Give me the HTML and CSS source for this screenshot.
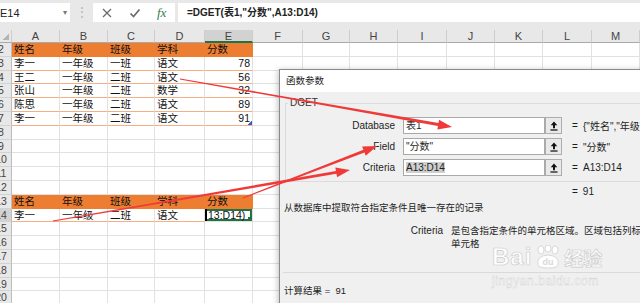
FILE: index.html
```html
<!DOCTYPE html>
<html lang="zh-CN">
<head>
    <meta charset="UTF-8">
    <meta name="viewport" content="width=device-width, initial-scale=1.0">
    <title>DGET 函数参数</title>
    <link rel="stylesheet" href="styles.css">
</head>
<body>

<!-- formula bar -->
<div class="formula-bar">
    <div class="name-box"><span>E14</span><span class="drop">▾</span></div>
    <div class="grip">⋮</div>
    <div class="fx-box">
        <svg class="ico" viewBox="0 0 12 12"><path d="M2 2 L10 10 M10 2 L2 10" stroke="#6b6b6b" stroke-width="1.3"/></svg>
        <svg class="ico" viewBox="0 0 12 12"><path d="M1.5 6.5 L4.5 9.5 L10.5 2.5" fill="none" stroke="#6b6b6b" stroke-width="1.7"/></svg>
        <span class="fx">fx</span>
    </div>
    <div class="formula">=DGET(表1,"分数",A13:D14)</div>
</div>

<!-- worksheet -->
<div class="sheet">
    <div class="row heads"><span class="corner"></span><span>A</span><span>B</span><span>C</span><span>D</span><span class="sel">E</span><span>F</span><span>G</span><span>H</span><span>I</span><span>J</span><span>K</span><span>L</span><span>M</span></div>
    <div class="row"><span class="rh"><span class="n">2</span></span><span class="th">姓名</span><span class="th">年级</span><span class="th">班级</span><span class="th">学科</span><span class="th">分数</span><span></span><span></span><span></span><span></span><span></span><span></span><span></span><span></span></div>
    <div class="row"><span class="rh"><span class="n">3</span></span><span class="td">李一</span><span class="td">一年级</span><span class="td">一班</span><span class="td">语文</span><span class="td num">78</span><span></span><span></span><span></span><span></span><span></span><span></span><span></span><span></span></div>
    <div class="row"><span class="rh"><span class="n">4</span></span><span class="td">王二</span><span class="td">一年级</span><span class="td">二班</span><span class="td">语文</span><span class="td num">56</span><span></span><span></span><span></span><span></span><span></span><span></span><span></span><span></span></div>
    <div class="row"><span class="rh"><span class="n">5</span></span><span class="td">张山</span><span class="td">一年级</span><span class="td">二班</span><span class="td">数学</span><span class="td num">32</span><span></span><span></span><span></span><span></span><span></span><span></span><span></span><span></span></div>
    <div class="row"><span class="rh"><span class="n">6</span></span><span class="td">陈思</span><span class="td">一年级</span><span class="td">二班</span><span class="td">语文</span><span class="td num">89</span><span></span><span></span><span></span><span></span><span></span><span></span><span></span><span></span></div>
    <div class="row"><span class="rh"><span class="n">7</span></span><span class="td">李一</span><span class="td">一年级</span><span class="td">二班</span><span class="td">语文</span><span class="td num resize">91</span><span></span><span></span><span></span><span></span><span></span><span></span><span></span><span></span></div>
    <div class="row"><span class="rh"><span class="n">8</span></span><span></span><span></span><span></span><span></span><span></span><span></span><span></span><span></span><span></span><span></span><span></span><span></span><span></span></div>
    <div class="row"><span class="rh"><span class="n">9</span></span><span></span><span></span><span></span><span></span><span></span><span></span><span></span><span></span><span></span><span></span><span></span><span></span><span></span></div>
    <div class="row"><span class="rh"><span class="n">10</span></span><span></span><span></span><span></span><span></span><span></span><span></span><span></span><span></span><span></span><span></span><span></span><span></span><span></span></div>
    <div class="row"><span class="rh"><span class="n">11</span></span><span></span><span></span><span></span><span></span><span></span><span></span><span></span><span></span><span></span><span></span><span></span><span></span><span></span></div>
    <div class="row"><span class="rh"><span class="n">12</span></span><span></span><span></span><span></span><span></span><span></span><span></span><span></span><span></span><span></span><span></span><span></span><span></span><span></span></div>
    <div class="row"><span class="rh"><span class="n">13</span></span><span class="th">姓名</span><span class="th">年级</span><span class="th">班级</span><span class="th">学科</span><span class="th">分数</span><span></span><span></span><span></span><span></span><span></span><span></span><span></span><span></span></div>
    <div class="row"><span class="rh sel"><span class="n">14</span></span><span class="td">李一</span><span class="td">一年级</span><span class="td">二班</span><span class="td">语文</span><span class="active"><span class="caret"></span>13:D14)</span><span></span><span></span><span></span><span></span><span></span><span></span><span></span><span></span></div>
    <div class="row"><span class="rh"><span class="n">15</span></span><span></span><span></span><span></span><span></span><span></span><span></span><span></span><span></span><span></span><span></span><span></span><span></span><span></span></div>
    <div class="row"><span class="rh"><span class="n">16</span></span><span></span><span></span><span></span><span></span><span></span><span></span><span></span><span></span><span></span><span></span><span></span><span></span><span></span></div>
    <div class="row"><span class="rh"><span class="n">17</span></span><span></span><span></span><span></span><span></span><span></span><span></span><span></span><span></span><span></span><span></span><span></span><span></span><span></span></div>
    <div class="row"><span class="rh"><span class="n">18</span></span><span></span><span></span><span></span><span></span><span></span><span></span><span></span><span></span><span></span><span></span><span></span><span></span><span></span></div>
    <div class="row"><span class="rh"><span class="n">19</span></span><span></span><span></span><span></span><span></span><span></span><span></span><span></span><span></span><span></span><span></span><span></span><span></span><span></span></div>
    <div class="row"><span class="rh"><span class="n">20</span></span><span></span><span></span><span></span><span></span><span></span><span></span><span></span><span></span><span></span><span></span><span></span><span></span><span></span></div>
</div>

<!-- function arguments dialog -->
<div class="dialog">
    <div class="dlg-title">函数参数</div>
    <fieldset class="args">
        <legend>DGET</legend>
        <div class="arg">
            <label>Database</label>
            <div class="input">表1</div>
            <button class="pick"><svg viewBox="0 0 9 11"><path d="M4.5 0.5 L0.8 4.6 H3.4 V8 H5.6 V4.6 H8.2 Z"/><rect x="0.5" y="9.3" width="8" height="1.4"/></svg></button>
            <span class="eq">=</span><span class="val">{"姓名","年级"</span>
        </div>
        <div class="arg">
            <label>Field</label>
            <div class="input">"分数"</div>
            <button class="pick"><svg viewBox="0 0 9 11"><path d="M4.5 0.5 L0.8 4.6 H3.4 V8 H5.6 V4.6 H8.2 Z"/><rect x="0.5" y="9.3" width="8" height="1.4"/></svg></button>
            <span class="eq">=</span><span class="val">"分数"</span>
        </div>
        <div class="arg">
            <label>Criteria</label>
            <div class="input"><span class="picked">A13:D14</span></div>
            <button class="pick"><svg viewBox="0 0 9 11"><path d="M4.5 0.5 L0.8 4.6 H3.4 V8 H5.6 V4.6 H8.2 Z"/><rect x="0.5" y="9.3" width="8" height="1.4"/></svg></button>
            <span class="eq">=</span><span class="val">A13:D14</span>
        </div>
    </fieldset>
    <div class="result-line"><span>=</span><span class="val">91</span></div>
    <p class="desc">从数据库中提取符合指定条件且唯一存在的记录</p>
    <div class="help">
        <span class="help-name">Criteria</span>
        <span class="help-text">是包含指定条件的单元格区域。区域包括列标签<br>单元格</span>
    </div>
    <hr class="rule">
    <div class="total">计算结果 = &nbsp;91</div>
</div>

<!-- watermark -->
<div class="watermark">
    <div class="wm-top">
        <span class="wm-bai">Bai</span>
        <svg class="paw" viewBox="0 0 32 24">
            <ellipse cx="9" cy="5" rx="3" ry="4"/>
            <ellipse cx="16" cy="3.5" rx="3" ry="3.5"/>
            <ellipse cx="23" cy="5" rx="3" ry="4"/>
            <path d="M6 20 Q4 11 16 10 Q28 11 26 20 Q25 23 16 23 Q7 23 6 20 Z"/>
            <text x="16" y="20" text-anchor="middle">du</text>
        </svg>
        <span class="wm-jy">经验</span>
    </div>
    <div class="wm-url">jingyan.baidu.com</div>
</div>

<!-- red annotation arrows -->
<svg class="arrows" viewBox="0 0 640 303">
    <polygon points="180.09,78.51 438.46,123.09 439.07,119.65 452,127 437.33,129.49 437.94,126.05 179.91,79.49"/>
    <polygon points="242.82,197.53 363.40,149.67 362.13,146.41 377,146 365.75,155.73 364.48,152.47 243.18,198.47"/>
    <polygon points="52.92,220.51 335.95,170.89 335.35,167.44 350,170 337.05,177.30 336.45,173.85 53.08,221.49"/>
</svg>

</body>
</html>
```

FILE: styles.css
```css
/* Excel window with the DGET argument dialog */
* {
    box-sizing: border-box;
}
body {
    margin: 0;
    width: 640px;
    height: 303px;
    overflow: hidden;
    position: relative;
    background-color: #fff;
    font-family: "Liberation Sans", "Noto Sans CJK SC", sans-serif;
    color: #111;
}

/* formula bar */
.formula-bar {
    display: flex;
    height: 30px;
    padding: 3px 0 8px;
    background-color: #e8e8e8;
    font-size: 11px;
}
.name-box {
    width: 70px;
    background-color: #fff;
    display: flex;
    align-items: center;
    justify-content: space-between;
    padding-right: 3px;
    color: #222;
}
.drop {
    font-size: 8px;
    color: #777;
}
.grip {
    width: 23px;
    text-align: center;
    line-height: 19px;
    color: #b3b3b3;
    font-size: 12px;
}
.fx-box {
    width: 82px;
    background-color: #fff;
    display: flex;
    align-items: center;
    gap: 16px;
    padding-left: 8px;
}
.ico {
    width: 12px;
    height: 12px;
}
.fx {
    width: 12px;
    font-family: "Liberation Serif", serif;
    font-style: italic;
    font-size: 13px;
    color: #2e7d4f;
}
.formula {
    flex: 1;
    margin-left: 3px;
    background-color: #fff;
    padding-left: 9px;
    line-height: 19px;
    font-size: 10px;
    font-weight: bold;
    color: #222;
}

/* worksheet grid */
.row {
    display: grid;
    grid-template-columns: 12px 48px 48px 47px 50px 48px 50px 47px 48px 49px 48px 48px 49px 48px;
    height: 13.8px;
    font-size: 10.5px;
    line-height: 12.8px;
}
.row > span {
    border-right: 1px solid #e1e1e1;
    border-bottom: 1px solid #e1e1e1;
    padding: 0 2px;
    white-space: nowrap;
    overflow: hidden;
}
.heads {
    height: 13px;
    background-color: #e8e8e8;
    color: #444;
    font-size: 11px;
    line-height: 12px;
    text-align: center;
}
.heads > span {
    border-right-color: #cdcdcd;
    border-bottom-color: #a9a9a9;
}
.heads > .sel {
    background-color: #d2d2d2;
    border-bottom: 2px solid #217346;
}
.heads > .corner {
    background: linear-gradient(135deg, transparent 52%, #b4b4b4 52%) right 2px bottom 2px / 7px 7px no-repeat;
}
.row > .rh {
    padding: 0;
    background-color: #e8e8e8;
    color: #444;
    border-right-color: #bdbdbd;
    border-bottom-color: #d2d2d2;
}
.row > .rh.sel {
    background-color: #d2d2d2;
}
.n {
    display: block;
    width: 22px;
    margin-left: -10px;
    text-align: center;
}
.row > .th {
    background-color: #ed7d31;
    border-right-color: #ed7d31;
    border-bottom-color: #ed7d31;
}
.row > .td {
    border-bottom-color: #f4b084;
}
.num {
    text-align: right;
}
.resize {
    position: relative;
}
.resize::after {
    content: "";
    position: absolute;
    right: 0;
    bottom: 0;
    width: 4px;
    height: 4px;
    background: linear-gradient(135deg, transparent 45%, #3b5bc8 45%);
}
.row > .active {
    position: relative;
    padding: 0;
    box-shadow: inset 0 0 0 2px #217346;
}
.active::after {
    content: "";
    position: absolute;
    right: 0;
    bottom: 0;
    width: 4px;
    height: 4px;
    background-color: #217346;
}
.caret {
    display: inline-block;
    width: 2px;
    height: 12px;
    margin-right: 1px;
    vertical-align: -2px;
    background-color: #000;
}

/* dialog */
.dialog {
    position: absolute;
    left: 279px;
    top: 69px;
    width: 380px;
    height: 240px;
    background-color: #f0f0f0;
    border: 1px solid #8a8a8a;
    box-shadow: -1px 1px 6px rgba(0, 0, 0, 0.25);
    font-size: 10px;
    color: #1e1e1e;
}
.dlg-title {
    height: 22px;
    line-height: 22px;
    padding-left: 6px;
    background-color: #fff;
    font-size: 9.5px;
}
.args {
    margin: 5px 5px 0;
    padding: 8px 0 5px;
    border: 1px solid #dcdcdc;
    min-width: 0;
}
.args legend {
    margin-left: 2px;
    padding: 0 2px;
    line-height: 12px;
    color: #333;
}
.arg {
    display: flex;
    align-items: center;
    height: 17px;
}
.arg + .arg {
    margin-top: 4px;
}
.arg label {
    width: 109px;
    margin-right: 8px;
    text-align: right;
}
.input {
    width: 142px;
    height: 17px;
    padding: 0 2px;
    line-height: 15px;
    background-color: #fff;
    border: 1px solid #a9a9a9;
    white-space: nowrap;
    overflow: hidden;
}
.picked {
    background-color: #cfcfcf;
}
.pick {
    width: 17px;
    height: 17px;
    padding: 0;
    display: flex;
    align-items: center;
    justify-content: center;
    background-color: #e9e9e9;
    border: 1px solid #adadad;
}
.pick svg {
    width: 8px;
    height: 10px;
    fill: #111;
}
.eq {
    width: 6px;
    margin-left: 10px;
}
.val {
    margin-left: 5px;
    white-space: nowrap;
}
.result-line {
    margin-top: 4px;
    padding-left: 292px;
    line-height: 12px;
}
.desc {
    margin: 4px 0 0;
    padding-left: 4px;
    line-height: 12px;
    font-size: 9.5px;
}
.help {
    display: flex;
    margin-top: 10px;
    line-height: 13px;
}
.help-name {
    width: 163px;
    margin-right: 8px;
    text-align: right;
}
.help-text {
    white-space: nowrap;
    font-size: 9.5px;
}
.rule {
    height: 0;
    margin: 22px 0 0 3px;
    border: 0;
    border-top: 1px solid #d9d9d9;
}
.total {
    margin-top: 12px;
    padding-left: 4px;
    line-height: 12px;
    font-size: 9.5px;
}

/* faint site watermark */
.watermark {
    position: absolute;
    left: 492px;
    top: 244px;
    color: rgba(255, 255, 255, 0.9);
    -webkit-text-stroke: 0.6px #c9c9c9;
}
.wm-top {
    display: flex;
    align-items: center;
    height: 26px;
}
.wm-bai {
    font-size: 24px;
    font-weight: bold;
    letter-spacing: 1px;
}
.paw {
    width: 32px;
    height: 24px;
    fill: #fff;
    stroke: #cfcfcf;
    stroke-width: 0.8;
}
.paw text {
    font-size: 9px;
    font-weight: bold;
    fill: #d8d8d8;
    stroke: none;
}
.wm-jy {
    font-size: 19px;
    font-weight: bold;
}
.wm-url {
    margin-top: 4px;
    font-size: 12px;
    letter-spacing: 0.6px;
    -webkit-text-stroke: 0.4px #cfcfcf;
}

/* annotation overlay */
.arrows {
    position: absolute;
    left: 0;
    top: 0;
    width: 640px;
    height: 303px;
    fill: #f03a3a;
    pointer-events: none;
}
```
